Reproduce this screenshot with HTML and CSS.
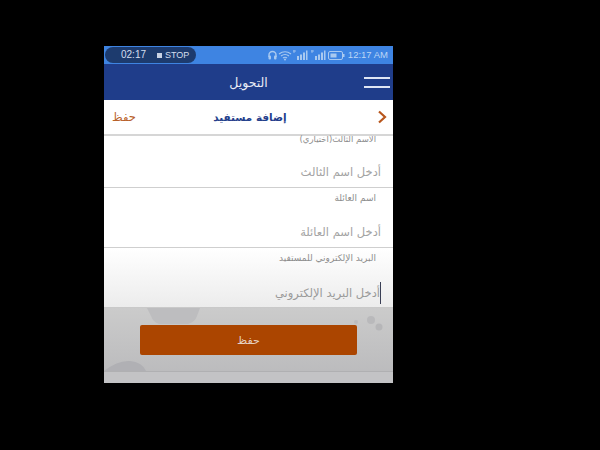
FILE: index.html
```html
<!DOCTYPE html>
<html lang="ar">
<head>
<meta charset="utf-8">
<title>إضافة مستفيد</title>
<link rel="stylesheet" href="styles.css">
</head>
<body>
<div class="phone">
  <div class="status">
    <div class="pill"><span class="time">02:17</span><span class="stop"><i class="sq"></i>STOP</span></div>
    <div class="sys">
      <svg class="ic" width="78" height="12" viewBox="0 0 78 12">
        <path d="M1 8V6a3.500 3.500 0 0 1 7 0v2" fill="none" stroke="#a9c9f0" stroke-width="1.400"/>
        <rect x="0.500" y="6.500" width="2.500" height="4" rx="1" fill="#a9c9f0"/>
        <rect x="6" y="6.500" width="2.500" height="4" rx="1" fill="#a9c9f0"/>
        <path d="M11 5q6-4.500 12 0M13 7q4-3 8 0M15 9q2-1.500 4 0" fill="none" stroke="#a9c9f0" stroke-width="1.200"/>
        <circle cx="17" cy="10.500" r="1" fill="#a9c9f0"/>
        <path d="M25 2h3M26 1v3" stroke="#a9c9f0" stroke-width="0.800"/>
        <path d="M29 7h2v4h-2zM32 5.500h2V11h-2zM35 3.500h2V11h-2zM38 1.500h1.500V11H38z" fill="#a9c9f0"/>
        <path d="M43 2h3M44 1v3" stroke="#a9c9f0" stroke-width="0.800"/>
        <path d="M47 7h2v4h-2zM50 5.500h2V11h-2zM53 3.500h2V11h-2zM56 1.500h1.500V11H56z" fill="#a9c9f0"/>
        <rect x="60.500" y="2.500" width="14" height="8" rx="1.500" fill="none" stroke="#a9c9f0"/>
        <rect x="62.500" y="4.500" width="6" height="4" fill="#a9c9f0"/>
        <rect x="75" y="5" width="1.500" height="3" fill="#a9c9f0"/>
      </svg>
      <span class="clock">12:17 AM</span>
    </div>
  </div>
  <header class="appbar">
    <span class="menu"><i></i><i></i></span>
    <h1 class="title">التحويل</h1>
    <span class="menu-spacer"></span>
  </header>
  <div class="subbar">
    <svg class="chev" width="10" height="14" viewBox="0 0 10 14"><path d="M2 1.500 8 7l-6 5.500" fill="none" stroke="#b8561c" stroke-width="2.200"/></svg>
    <h2 class="subtitle">إضافة مستفيد</h2>
    <a class="savelink">حفظ</a>
  </div>
  <main class="form">
    <div class="field first">
      <label class="lbl clip">الاسم الثالث(اختياري)</label>
      <div class="ph">أدخل اسم الثالث</div>
    </div>
    <div class="field second">
      <label class="lbl">اسم العائلة</label>
      <div class="ph">أدخل اسم العائلة</div>
    </div>
    <div class="field third">
      <label class="lbl">البريد الإلكتروني للمستفيد</label>
      <div class="ph focus">أدخل البريد الإلكتروني</div>
    </div>
  </main>
  <footer class="foot">
    <svg class="deco" width="289" height="63" viewBox="0 0 289 63">
      <path d="M43 0h53l-3 8q-2 6-9 8H55q-6-2-8-8z" fill="#bdbdbf"/>
      <circle cx="267" cy="12" r="4" fill="#b9b9bb"/>
      <circle cx="275" cy="19" r="3.500" fill="#b6b6b8"/>
      <circle cx="252" cy="14" r="2" fill="#bcbcbe"/>
      <path d="M0 63q14-11 26-10t16 10z" fill="#b0b0b4"/>
    </svg>
    <button class="save">حفظ</button>
    <div class="strip"></div>
  </footer>
</div>
</body>
</html>
```
FILE: styles.css
```css
* { box-sizing: border-box; }
html, body { margin: 0; height: 100%; background: #000; overflow: hidden; }
body { padding: 46px 0 0 104px; font-family: "DejaVu Sans", "Noto Sans", sans-serif; }
.phone { width: 289px; height: 337px; background: #fff; display: flex; flex-direction: column; overflow: hidden; }
.status { height: 18px; background: #3e84e2; display: flex; align-items: center; justify-content: space-between; padding: 0 5px 0 1px; }
.pill { width: 91px; height: 16px; border-radius: 8px; background: #1d3b6e; color: #d4deef; font: 10px/16px "Liberation Sans", sans-serif; display: flex; gap: 11px; padding-left: 16px; }
.stop { display: flex; align-items: center; gap: 3px; font-size: 9px; }
.sq { width: 5px; height: 5px; background: #c8d2e4; display: block; }
.sys { display: flex; align-items: center; gap: 2px; color: #bcd6f6; font: 9.500px/18px "Liberation Sans", sans-serif; }
.appbar { height: 36px; background: #1f3d8a; display: flex; align-items: center; justify-content: space-between; padding: 0 3px; direction: rtl; }
.menu { width: 26px; display: flex; flex-direction: column; gap: 7px; }
.menu i { display: block; height: 2px; background: #dfe6f4; }
.menu-spacer { width: 26px; }
.title { margin: 0; flex: 1; text-align: center; color: #e8ecf5; font-size: 12.500px; font-weight: 400; }
.subbar { height: 36px; border-bottom: 2px solid #d6d6d6; display: flex; align-items: center; justify-content: space-between; direction: rtl; padding: 0 6px 0 8px; }
.subtitle { margin: 0 13px 0 0; flex: 1; text-align: center; color: #24408c; font-size: 10.400px; font-weight: 700; }
.savelink { color: #b8622a; font-size: 11.500px; }
.form { direction: rtl; }
.field { border-bottom: 1px solid #cfcfcf; padding: 0 12px; }
.first { height: 52px; }
.second { height: 60px; padding-top: 5px; }
.third { height: 60px; padding-top: 5px; background: linear-gradient(#fff, #ececec); border-bottom-color: #c9c9c9; }
.lbl { display: block; color: #8d8d8d; font-size: 9px; line-height: 10px; padding-right: 5px; }
.clip { font-size: 8.500px; line-height: 6px; }
.ph { color: #a3a3a3; font-size: 11.500px; line-height: 20px; }
.first .ph { margin-top: 20px; }
.second .ph { margin-top: 19px; }
.third .ph { margin-top: 19px; }
.focus { display: inline-block; line-height: 22px; border-right: 1px solid #3a3f55; color: #9a9a9a; }
.foot { height: 75px; background: linear-gradient(#cbcbcb, #b9b9bb); position: relative; display: flex; flex-direction: column; align-items: center; }
.deco { position: absolute; left: 0; top: 0; }
.save { position: relative; width: 217px; height: 30px; margin: 17px 0 16px; background: #ab4500; color: #e6d3c4; border: 0; border-radius: 2px; font: 11px "DejaVu Sans", sans-serif; padding: 0; }
.strip { width: 100%; height: 12px; background: #c3c3c5; border-top: 1px solid #b0b0b2; position: relative; }
```
